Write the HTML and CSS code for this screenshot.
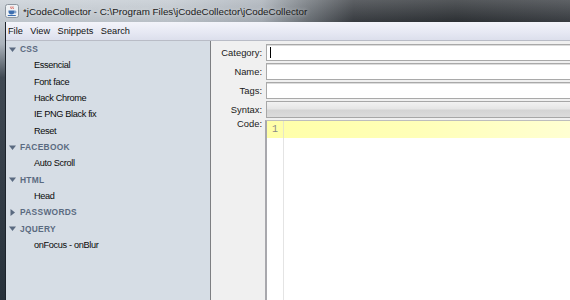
FILE: index.html
```html
<!DOCTYPE html>
<html>
<head>
<meta charset="utf-8">
<link rel="stylesheet" href="styles.css">
</head>
<body>
<div class="window">
  <div class="titlebar">
    <svg class="appicon" width="14" height="14" viewBox="0 0 14 14">
      <rect x="0.5" y="0.5" width="13" height="13" rx="2" fill="#eef1f4" stroke="#8d969f"/>
      <path d="M6 2.5c-1 1 1 1.5 0 2.5M8 2.5c-1 1 1 1.5 0 2.5" stroke="#d23a2a" stroke-width="0.9" fill="none"/>
      <path d="M3.5 6.5h6v1.5c0 1.6-1.3 2.5-3 2.5s-3-0.9-3-2.5z" fill="#3d6fb0"/>
      <path d="M9.5 7.2h1c0.8 0 0.8 1.6 0 1.6h-1.2" stroke="#3d6fb0" stroke-width="0.8" fill="none"/>
      <rect x="2.8" y="11" width="8" height="1" fill="#3d6fb0"/>
    </svg>
    <span class="title">*jCodeCollector - C:\Program Files\jCodeCollector\jCodeCollector</span>
  </div>
  <div class="body">
    <div class="frame"></div>
    <div class="main">
      <div class="menubar">
        <span class="menu">File</span>
        <span class="menu">View</span>
        <span class="menu">Snippets</span>
        <span class="menu">Search</span>
      </div>
      <div class="content">
        <div class="sidebar">
          <div class="group"><svg class="tri" width="7" height="7" viewBox="0 0 7 7"><path d="M0 1.5h7L3.5 6z"/></svg>CSS</div>
          <div class="item">Essencial</div>
          <div class="item">Font face</div>
          <div class="item">Hack Chrome</div>
          <div class="item">IE PNG Black fix</div>
          <div class="item">Reset</div>
          <div class="group"><svg class="tri" width="7" height="7" viewBox="0 0 7 7"><path d="M0 1.5h7L3.5 6z"/></svg>FACEBOOK</div>
          <div class="item">Auto Scroll</div>
          <div class="group"><svg class="tri" width="7" height="7" viewBox="0 0 7 7"><path d="M0 1.5h7L3.5 6z"/></svg>HTML</div>
          <div class="item">Head</div>
          <div class="group"><svg class="tri" width="7" height="7" viewBox="0 0 7 7"><path d="M1.5 0v7L6 3.5z"/></svg>PASSWORDS</div>
          <div class="group"><svg class="tri" width="7" height="7" viewBox="0 0 7 7"><path d="M0 1.5h7L3.5 6z"/></svg>JQUERY</div>
          <div class="item">onFocus - onBlur</div>
        </div>
        <div class="form">
          <label class="label">Category:</label>
          <div class="field"><span class="caret"></span></div>
          <label class="label">Name:</label>
          <div class="field"></div>
          <label class="label">Tags:</label>
          <div class="field"></div>
          <label class="label">Syntax:</label>
          <div class="combo"></div>
          <label class="label code-label">Code:</label>
          <div class="code">
            <div class="line current">
              <span class="num">1</span><span class="text"></span>
            </div>
            <div class="rest">
              <span class="gutter"></span><span class="text"></span>
            </div>
          </div>
        </div>
      </div>
    </div>
  </div>
</div>
</body>
</html>
```

FILE: styles.css
```css
* { box-sizing: border-box; }
html, body {
  margin: 0;
  padding: 0;
  width: 570px;
  height: 300px;
  overflow: hidden;
  background: #f0f0f0;
}
.window {
  width: 570px;
  height: 300px;
  display: flex;
  flex-direction: column;
  font-family: "Liberation Sans", Arial, sans-serif;
  color: #000;
}
.titlebar {
  height: 22px;
  flex: none;
  display: flex;
  align-items: center;
  padding-left: 5px;
  gap: 4px;
  background:
    linear-gradient(180deg, rgba(255,255,255,0.18), rgba(0,0,0,0.05)),
    linear-gradient(90deg, #c9d0d7 0%, #c2c9d0 30%, #a9b0b8 46%, #6d7379 54%, #3a3e43 62%, #2e3236 80%, #3b3f44 100%);
}
.appicon { flex: none; }
.title {
  font-size: 9.8px;
  color: #1a1a1a;
  white-space: nowrap;
  text-shadow: 0 0 4px rgba(255,255,255,0.6);
}
.body {
  flex: 1;
  display: flex;
  min-height: 0;
}
.frame {
  width: 6px;
  flex: none;
  background: linear-gradient(180deg, #c3c9d0 0%, #aab2ba 8%, #3f4852 20%, #27303a 100%);
  border-right: 1px solid #1c232b;
}
.main {
  flex: 1;
  display: flex;
  flex-direction: column;
  min-width: 0;
}
.menubar {
  height: 19px;
  flex: none;
  display: flex;
  align-items: center;
  gap: 7.5px;
  padding-left: 2px;
  background: linear-gradient(180deg, #f3f4fa 0%, #e6e8f3 60%, #dcdfec 100%);
  border-bottom: 1px solid #b9bcc6;
}
.menu {
  font-size: 9.2px;
  color: #111;
}
.content {
  flex: 1;
  display: flex;
  min-height: 0;
}
.sidebar {
  width: 205px;
  flex: none;
  background: #d6dde5;
  border-right: 1px solid #7d7f82;
}
.group, .item {
  height: 16.33px;
  display: flex;
  align-items: center;
  white-space: nowrap;
}
.group {
  padding-left: 3px;
  font-size: 8.4px;
  font-weight: bold;
  letter-spacing: 0.3px;
  color: #5a6a80;
}
.tri {
  fill: #5a6a80;
  margin-right: 4px;
  flex: none;
}
.item {
  padding-left: 28px;
  font-size: 9.2px;
  letter-spacing: -0.35px;
  color: #0a0a0a;
}
.form {
  flex: 1;
  display: grid;
  grid-template-columns: 51px 1fr;
  grid-template-rows: 17px 17px 17px 17px 1fr;
  column-gap: 4px;
  row-gap: 2px;
  padding-top: 3px;
  min-width: 0;
  background: #f0f0f0;
}
.label {
  font-size: 9.4px;
  color: #1a1a1a;
  text-align: right;
  align-self: center;
  white-space: nowrap;
}
.code-label {
  align-self: start;
  margin-top: -2px;
}
.field {
  background: #fff;
  border: 1px solid #a9a9a9;
  border-right: none;
  box-shadow: inset 0 1px 0 #dcdcdc;
  position: relative;
}
.caret {
  position: absolute;
  left: 3px;
  top: 2px;
  width: 1px;
  height: 11px;
  background: #000;
}
.combo {
  border: 1px solid #a7a7a7;
  border-right: none;
  background: linear-gradient(180deg, #f2f2f2 0%, #e6e6e6 45%, #d4d4d4 55%, #dcdcdc 100%);
}
.code {
  background: #fff;
  border-left: 2px solid #a8a8ad;
  border-top: 1px solid #bdbdbd;
  display: flex;
  flex-direction: column;
  margin-left: -1px;
}
.line {
  height: 17px;
  display: flex;
  flex: none;
}
.current {
  background: linear-gradient(90deg, #ffffa8 0%, #ffffb8 50%, #ffffd2 100%);
}
.num {
  width: 17px;
  flex: none;
  font-family: "Liberation Mono", monospace;
  font-size: 10px;
  color: #8a8a8a;
  padding-left: 5px;
  padding-top: 3px;
  border-right: 1px solid #e6e6c8;
}
.rest {
  flex: 1;
  display: flex;
}
.gutter {
  width: 17px;
  flex: none;
  border-right: 1px solid #e4e4e4;
}
.text { flex: 1; }
```
